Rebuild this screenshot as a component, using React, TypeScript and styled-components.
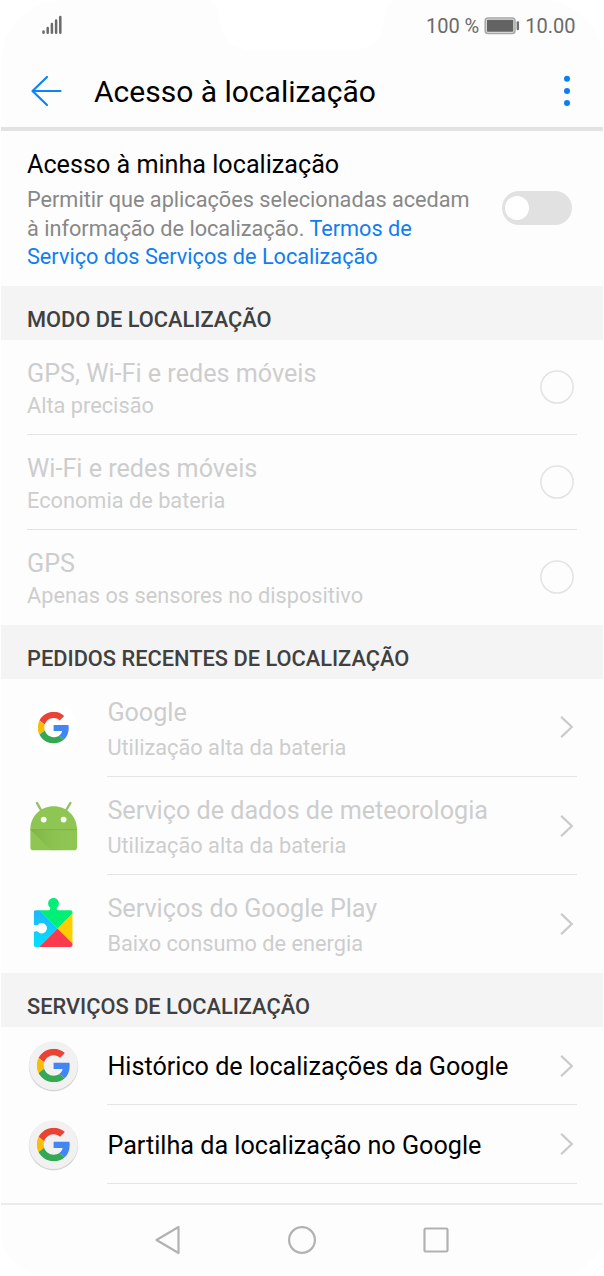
import React from "react";
import styled, { createGlobalStyle } from "styled-components";

const GlobalStyle = createGlobalStyle`
  * { box-sizing: border-box; }
  body { margin: 0; background: #fff; font-family: Roboto, sans-serif; }
  svg { display: block; flex: none; }
`;

const Screen = styled.main`
  position: relative;
  width: 602px;
  height: 1275px;
  margin-left: 1px;
  display: flex;
  flex-direction: column;
  background: #fdfdfd;
  border-radius: 62px 62px 44px 44px;
  overflow: hidden;
`;

const Notch = styled.svg`
  position: absolute;
  top: 0;
  left: 211px;
`;

const StatusBar = styled.div`
  height: 52px;
  flex: none;
  display: flex;
  justify-content: space-between;
  padding: 0 27.5px 0 41px;
  color: #6a6a6a;
`;

const StatusGroup = styled.div`
  display: flex;
  height: 52px;
  align-items: center;
  gap: 5px;
  font-size: 20px;
  line-height: 24px;
  white-space: nowrap;
`;

const AppBar = styled.header`
  height: 79px;
  flex: none;
  display: flex;
  align-items: center;
  padding: 2px 30px 0 29px;
  border-bottom: 4px solid #e2e2e2;
`;

const Title = styled.h1`
  margin: 2px auto 0 32px;
  font-size: 30px;
  line-height: 36px;
  font-weight: 400;
  color: #000;
  white-space: nowrap;
`;

const Intro = styled.section`
  height: 155px;
  flex: none;
  display: flex;
  justify-content: space-between;
  padding: 19px 31px 0 26px;
`;

const Toggle = styled.button`
  width: 70.5px;
  height: 34px;
  margin: 41px 0 0;
  padding: 0 0 0 3px;
  border: 0;
  border-radius: 17px;
  background: #e1e1e1;
  display: flex;
  align-items: center;
`;

const Knob = styled.span`
  width: 24px;
  height: 24px;
  border-radius: 50%;
  background: #fff;
`;

const SectionHeader = styled.h2`
  height: 53.5px;
  flex: none;
  margin: 0;
  padding: 20px 26px 0;
  background: #f4f4f4;
  color: #404040;
  font-size: 21.8px;
  line-height: 28px;
  font-weight: 500;
  white-space: nowrap;
`;

const Row = styled.div<{ $h: number }>`
  height: ${(p) => p.$h}px;
  flex: none;
  display: flex;
  padding-right: 26px;
  padding-left: 26px;
`;

const IconSlot = styled.div`
  width: 80.4px;
  flex: none;
  display: flex;
  align-items: center;
`;

const RowBody = styled.div<{ $line?: boolean }>`
  flex: 1;
  display: flex;
  align-items: center;
  justify-content: space-between;
  padding-right: 3px;
  border-bottom: 1px solid ${(p) => (p.$line ? "#e4e4e4" : "transparent")};
`;

const RowText = styled.div<{ $drop: number }>`
  padding-top: ${(p) => p.$drop}px;
`;

const Primary = styled.div<{ $muted?: boolean }>`
  font-size: 25.16px;
  line-height: 30px;
  color: ${(p) => (p.$muted ? "#cdcdcd" : "#000")};
  white-space: nowrap;
`;

const Secondary = styled.div<{ $gap: number }>`
  margin-top: ${(p) => p.$gap}px;
  font-size: 21.75px;
  line-height: 26px;
  color: #cdcdcd;
  white-space: nowrap;
`;

const Description = styled.p`
  margin: 6px 0 0;
  font-size: 21.68px;
  line-height: 28.5px;
  color: #888;
  white-space: nowrap;
`;

const TermsLink = styled.a`
  color: #0f7ff0;
`;

const NavBar = styled.nav`
  margin-top: auto;
  height: 72px;
  flex: none;
  border-top: 2px solid #ebebeb;
  display: flex;
  justify-content: center;
  align-items: center;
  gap: 106px;
`;

const Radio = () => (
  <svg width="34" height="34" viewBox="0 0 34 34">
    <circle cx="17" cy="17" r="16.1" fill="none" stroke="#e3e3e3" strokeWidth="1.5" />
  </svg>
);

const Chevron = () => (
  <svg width="16" height="24" viewBox="0 0 16 24" fill="none" stroke="#cbcbcb" strokeWidth="2.2">
    <path d="M3.7 2.4 13.8 12 3.7 21.6" strokeLinecap="round" />
  </svg>
);

const GoogleG = ({ x, y, size }: { x: number; y: number; size: number }) => (
  <svg x={x} y={y} width={size} height={size} viewBox="0 0 48 48">
    <path fill="#EA4335" d="M24 9.5c3.54 0 6.71 1.22 9.21 3.6l6.85-6.85C35.9 2.38 30.47 0 24 0 14.62 0 6.51 5.38 2.56 13.22l7.98 6.19C12.43 13.72 17.74 9.5 24 9.5z" />
    <path fill="#4285F4" d="M46.98 24.55c0-1.57-.15-3.09-.38-4.55H24v9.02h12.94c-.58 2.96-2.26 5.48-4.78 7.18l7.73 6c4.51-4.18 7.09-10.36 7.09-17.65z" />
    <path fill="#FBBC05" d="M10.53 28.59c-.48-1.45-.76-2.99-.76-4.59s.27-3.14.76-4.59l-7.98-6.19C.92 16.46 0 20.12 0 24c0 3.88.92 7.54 2.56 10.78l7.97-6.19z" />
    <path fill="#34A853" d="M24 48c6.48 0 11.93-2.13 15.89-5.81l-7.73-6c-2.15 1.45-4.92 2.3-8.16 2.3-6.26 0-11.57-4.22-13.47-9.91l-7.98 6.19C6.51 42.62 14.62 48 24 48z" />
  </svg>
);

const GoogleIcon = ({ badge }: { badge?: boolean }) => (
  <svg width="52" height="52" viewBox="0 0 52 52">
    {badge && <circle cx="26.5" cy="26.6" r="24.8" fill="#e4e4e4" />}
    {badge && <circle cx="26.5" cy="26.4" r="24.4" fill="#cdcdcd" />}
    <circle cx="26.5" cy="25.6" r="24.4" fill={badge ? "#f1f1f1" : "#fff"} />
    {badge ? <GoogleG x={9.8} y={8.7} size={33.6} /> : <GoogleG x={10.8} y={9.8} size={31.6} />}
  </svg>
);

const AndroidIcon = () => (
  <svg width="52" height="52" viewBox="0 0 52 52">
    <defs>
      <linearGradient id="fold" x1="0" y1="0" x2="1" y2="0">
        <stop offset="0" stopColor="#6f9f3c" stopOpacity=".5" />
        <stop offset=".85" stopColor="#8bc34a" stopOpacity="0" />
      </linearGradient>
    </defs>
    <path d="M10 3 14.200 10.500M43.400 3 39 10.500" stroke="#94bf64" strokeWidth="2.400" strokeLinecap="round" />
    <path d="M3.400 29.500C3.400 15.500 14.200 6.200 26.700 6.200S50 15.500 50 29.500V47.400a2.800 2.800 0 0 1-2.800 2.800H6.200a2.800 2.800 0 0 1-2.800-2.800Z" fill="#8fc653" />
    <path d="M3.400 29.500H50V50.200H23.700Z" fill="url(#fold)" />
    <path d="M3.400 29.600H50" stroke="#7eae4b" strokeWidth=".9" />
    <circle cx="16.700" cy="19.600" r="2.900" fill="#fff" />
    <circle cx="36.600" cy="19.600" r="2.900" fill="#fff" />
  </svg>
);

const PlayServicesIcon = () => (
  <svg width="52" height="52" viewBox="-.3 0 52 52">
    <defs>
      <clipPath id="piece">
        <path d="M8.500 12.300H21.500Q23 12.300 23 10.800Q23 9.900 22.400 9.200A5.400 5.400 0 1 1 30 9.200Q29.400 9.900 29.400 10.800Q29.400 12.300 30.900 12.300H43.200a2 2 0 0 1 2 2V47a2 2 0 0 1-2 2H8.500a2 2 0 0 1-2-2V34.600Q6.500 33.400 7.700 33.400Q9.500 33.200 10.400 33.500A5.200 5.200 0 1 0 10.400 27.100Q9.500 27.500 7.700 27.200Q6.500 27.200 6.500 26V14.300a2 2 0 0 1 2-2Z" />
      </clipPath>
      <linearGradient id="sky" x1="0" y1="0" x2="0" y2="1">
        <stop offset="0" stopColor="#1fb5fb" />
        <stop offset="1" stopColor="#00e2ff" />
      </linearGradient>
    </defs>
    <g clipPath="url(#piece)">
      <path d="M6 12H12L30.300 30.600 12 49H6Z" fill="url(#sky)" />
      <path d="M11.800 12.300V0H48V12.600L30.200 30.600Z" fill="#00ef76" />
      <path d="M46 14.600V46.500L30.200 30.600Z" fill="#ffce00" />
      <path d="M30.200 30.600 46 46.400V50H10.800Z" fill="#f93b4d" />
    </g>
  </svg>
);

const modes = [
  ["GPS, Wi-Fi e redes móveis", "Alta precisão"],
  ["Wi-Fi e redes móveis", "Economia de bateria"],
  ["GPS", "Apenas os sensores no dispositivo"],
];

const requests = [
  { name: "Google", use: "Utilização alta da bateria", icon: <GoogleIcon /> },
  { name: "Serviço de dados de meteorologia", use: "Utilização alta da bateria", icon: <AndroidIcon /> },
  { name: "Serviços do Google Play", use: "Baixo consumo de energia", icon: <PlayServicesIcon /> },
];

const services = ["Histórico de localizações da Google", "Partilha da localização no Google"];

export default function App() {
  return (
    <>
      <GlobalStyle />
      <Screen>
        <Notch width="180" height="52" viewBox="0 0 180 52">
          <path d="M-8 0C3 1 6 9 7 20C9 38 21 50.500 43 50.500H137C158 50.500 170 39 172 22C173 9 176 1 188 0Z" fill="#fff" />
        </Notch>
        <StatusBar>
          <svg width="22" height="36" viewBox="0 0 22 36" stroke="#6a6a6a" strokeWidth="2.500" strokeLinecap="round">
            <path d="M1.500 31.500v1.300M5.700 28v4.800M9.900 24v8.800M14.100 20.500v12.300M18.300 17v15.800" />
          </svg>
          <StatusGroup>
            <span>100 %</span>
            <svg width="36" height="18" viewBox="0 0 36 18">
              <rect x="1.200" y="1" width="29.800" height="15.600" rx="2.800" fill="#e6e6e6" stroke="#a6a6a6" strokeWidth="1.500" />
              <rect x="2.900" y="2.800" width="26.400" height="12" rx=".8" fill="#636363" />
              <rect x="32.600" y="4.300" width="2.400" height="9" rx="1" fill="#707070" />
            </svg>
            <span>10.00</span>
          </StatusGroup>
        </StatusBar>
        <AppBar>
          <svg width="32" height="32" viewBox="0 0 32 32" fill="none" stroke="#0a84f8" strokeWidth="2.200" strokeLinecap="round" strokeLinejoin="round">
            <path d="M17 2 2.500 16 17 30M2.500 16H30.500" />
          </svg>
          <Title>Acesso à localização</Title>
          <svg width="12" height="32" viewBox="0 0 12 32" fill="#0a7ff5">
            <circle cx="6" cy="3.800" r="3" />
            <circle cx="6" cy="15.900" r="3" />
            <circle cx="6" cy="28" r="3" />
          </svg>
        </AppBar>
        <Intro>
          <div>
            <Primary>Acesso à minha localização</Primary>
            <Description>
              Permitir que aplicações selecionadas acedam
              <br />à informação de localização. <TermsLink>Termos de<br />Serviço dos Serviços de Localização</TermsLink>
            </Description>
          </div>
          <Toggle aria-label="Acesso à minha localização"><Knob /></Toggle>
        </Intro>
        <SectionHeader>MODO DE LOCALIZAÇÃO</SectionHeader>
        {modes.map(([name, detail], i) => (
          <Row key={name} $h={95.2}>
            <RowBody $line={i < 2}>
              <RowText $drop={4}>
                <Primary $muted>{name}</Primary>
                <Secondary $gap={4}>{detail}</Secondary>
              </RowText>
              <Radio />
            </RowBody>
          </Row>
        ))}
        <SectionHeader>PEDIDOS RECENTES DE LOCALIZAÇÃO</SectionHeader>
        {requests.map((r, i) => (
          <Row key={r.name} $h={98.3}>
            <IconSlot>{r.icon}</IconSlot>
            <RowBody $line={i < 2}>
              <RowText $drop={4.2}>
                <Primary $muted>{r.name}</Primary>
                <Secondary $gap={7}>{r.use}</Secondary>
              </RowText>
              <Chevron />
            </RowBody>
          </Row>
        ))}
        <SectionHeader>SERVIÇOS DE LOCALIZAÇÃO</SectionHeader>
        {services.map((name) => (
          <Row key={name} $h={78.5}>
            <IconSlot><GoogleIcon badge /></IconSlot>
            <RowBody $line>
              <RowText $drop={3}>
                <Primary>{name}</Primary>
              </RowText>
              <Chevron />
            </RowBody>
          </Row>
        ))}
        <NavBar>
          <svg width="28" height="30" viewBox="0 0 28 30" fill="none" stroke="#b2b2b2" strokeWidth="2.200" strokeLinejoin="round">
            <path d="M24.500 2 2.500 15l22 13Z" />
          </svg>
          <svg width="28" height="30" viewBox="0 0 28 30" fill="none" stroke="#b2b2b2" strokeWidth="2.200">
            <circle cx="14" cy="15" r="12.900" />
          </svg>
          <svg width="28" height="30" viewBox="0 0 28 30" fill="none" stroke="#b2b2b2" strokeWidth="2.200">
            <rect x="2.500" y="3.500" width="23" height="23" rx="1.300" />
          </svg>
        </NavBar>
      </Screen>
    </>
  );
}
